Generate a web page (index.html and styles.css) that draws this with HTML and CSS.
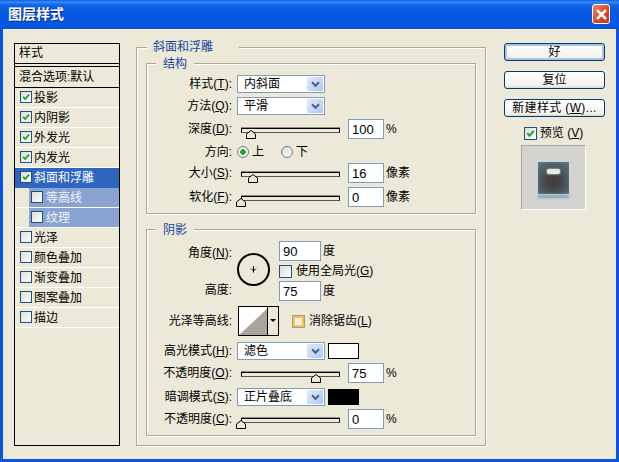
FILE: index.html
```html
<!DOCTYPE html>
<html lang="zh">
<head>
<meta charset="utf-8">
<title>图层样式</title>
<link rel="stylesheet" href="styles.css">
</head>
<body>
<svg class="defs" width="0" height="0" aria-hidden="true">
  <symbol id="tick" viewBox="0 0 12 12"><path d="M2.5 5.8 L5 8.4 L9.6 3.2" fill="none" stroke="#21a121" stroke-width="2.2"/></symbol>
  <symbol id="chev" viewBox="0 0 9 7"><path d="M1 1.2 L4.5 4.8 L8 1.2" fill="none" stroke="#4d6185" stroke-width="2"/></symbol>
  <symbol id="thumb" viewBox="0 0 10 9"><path d="M5 .5 L9.5 4 V8.5 H.5 V4 Z" fill="#ece9d8" stroke="#000"/></symbol>
</svg>
<div class="dialog">
  <header class="titlebar">
    <span class="title">图层样式</span>
    <span class="close"><svg width="13" height="13" viewBox="0 0 13 13"><path d="M2 2 L11 11 M11 2 L2 11" stroke="#fff" stroke-width="2.6"/></svg></span>
  </header>
  <div class="content">
    <nav class="list">
      <div class="head">样式</div>
      <div class="blend">混合选项:默认</div>
      <div class="item"><span class="cb"><svg><use href="#tick"/></svg></span>投影</div>
      <div class="item"><span class="cb"><svg><use href="#tick"/></svg></span>内阴影</div>
      <div class="item"><span class="cb"><svg><use href="#tick"/></svg></span>外发光</div>
      <div class="item"><span class="cb"><svg><use href="#tick"/></svg></span>内发光</div>
      <div class="item selected"><span class="cb"><svg><use href="#tick"/></svg></span>斜面和浮雕</div>
      <div class="item sub"><span class="subfill"><span class="cb"></span>等高线</span></div>
      <div class="item sub"><span class="subfill"><span class="cb"></span>纹理</span></div>
      <div class="item"><span class="cb"></span>光泽</div>
      <div class="item"><span class="cb"></span>颜色叠加</div>
      <div class="item"><span class="cb"></span>渐变叠加</div>
      <div class="item"><span class="cb"></span>图案叠加</div>
      <div class="item"><span class="cb"></span>描边</div>
    </nav>

    <main class="group outer">
      <span class="legend legend-outer">斜面和浮雕</span>

      <section class="group inner struct">
        <span class="legend">结构</span>
        <div class="row h22"><label class="lbl lh18">样式(<u>T</u>):</label><div class="select"><span>内斜面</span><i class="arrow"><svg><use href="#chev"/></svg></i></div></div>
        <div class="row h22"><label class="lbl lh18">方法(<u>Q</u>):</label><div class="select"><span>平滑</span><i class="arrow"><svg><use href="#chev"/></svg></i></div></div>
        <div class="row h22"><label class="lbl">深度(<u>D</u>):</label><div class="slider"><span class="track"></span><svg class="knob" style="left:9px"><use href="#thumb"/></svg></div><div class="num">100</div><span class="unit">%</span></div>
        <div class="row h22 radios"><label class="lbl lh22">方向:</label><span class="radio on"></span><span class="rtext first">上</span><span class="radio"></span><span class="rtext">下</span></div>
        <div class="row h24"><label class="lbl">大小(<u>S</u>):</label><div class="slider"><span class="track"></span><svg class="knob" style="left:11px"><use href="#thumb"/></svg></div><div class="num">16</div><span class="unit">像素</span></div>
        <div class="row h20"><label class="lbl">软化(<u>F</u>):</label><div class="slider"><span class="track"></span><svg class="knob" style="left:-1px"><use href="#thumb"/></svg></div><div class="num">0</div><span class="unit">像素</span></div>
      </section>

      <section class="group inner shadow">
        <span class="legend">阴影</span>
        <div class="angle">
          <div class="anglelabels"><label class="lbl a1">角度(<u>N</u>):</label><label class="lbl a2">高度:</label></div>
          <div class="dial"><svg width="7" height="7" viewBox="0 0 7 7"><path d="M3.5 0 V6.5 M1 2.5 L3.5 5 L6 2.5" fill="none" stroke="#000" stroke-width="1"/></svg></div>
          <div class="anglefields">
            <div class="fieldrow"><div class="num short">90</div><span class="unit small">度</span></div>
            <div class="fieldrow global"><span class="cb big"></span><span class="cbtext">使用全局光(<u>G</u>)</span></div>
            <div class="fieldrow"><div class="num short">75</div><span class="unit small">度</span></div>
          </div>
        </div>
        <div class="row h36"><label class="lbl lh30">光泽等高线:</label>
          <div class="contour"><svg class="curve" width="30" height="28" viewBox="0 0 30 28"><path d="M0 28 L30 0 V28 Z" fill="#a9a59a"/></svg><span class="caret"></span></div>
          <span class="cb big hot"></span><span class="cbtext">消除锯齿(<u>L</u>)</span>
        </div>
        <div class="row h21"><label class="lbl lh18">高光模式(<u>H</u>):</label><div class="select"><span>滤色</span><i class="arrow"><svg><use href="#chev"/></svg></i></div><span class="swatch white"></span></div>
        <div class="row h25"><label class="lbl">不透明度(<u>O</u>):</label><div class="slider"><span class="track"></span><svg class="knob" style="left:74px"><use href="#thumb"/></svg></div><div class="num">75</div><span class="unit">%</span></div>
        <div class="row h21"><label class="lbl lh18">暗调模式(<u>S</u>):</label><div class="select"><span>正片叠底</span><i class="arrow"><svg><use href="#chev"/></svg></i></div><span class="swatch black"></span></div>
        <div class="row h20"><label class="lbl">不透明度(<u>C</u>):</label><div class="slider"><span class="track"></span><svg class="knob" style="left:-1px"><use href="#thumb"/></svg></div><div class="num">0</div><span class="unit">%</span></div>
      </section>
    </main>

    <aside class="side">
      <button class="btn default">好</button>
      <button class="btn">复位</button>
      <button class="btn wide">新建样式 (<u>W</u>)...</button>
      <div class="previewcheck"><span class="cb big"><svg><use href="#tick"/></svg></span><span>预览 (<u>V</u>)</span></div>
      <div class="preview"><div class="tile"><span class="shine"></span></div><span class="cast"></span></div>
    </aside>
  </div>
</div>
</body>
</html>
```

FILE: styles.css
```css
* { box-sizing: border-box; }
html, body { margin: 0; padding: 0; }
body {
  width: 619px;
  height: 462px;
  overflow: hidden;
  font: 12px/16px "Liberation Sans", "Noto Sans CJK SC", sans-serif;
  color: #000;
}
.defs { position: absolute; }
u { text-decoration: underline; }

.dialog {
  width: 619px;
  height: 462px;
  display: flex;
  flex-direction: column;
  background: linear-gradient(to right, #0a4fd8, #0a55e4 2px);
}
.titlebar {
  height: 29px;
  flex: none;
  display: flex;
  align-items: center;
  justify-content: space-between;
  padding: 0 9px 1px 8px;
  background: linear-gradient(to bottom, #0a5be0 0, #3a8cf5 2px, #0f62e8 5px, #0455e0 14px, #0558e6 24px, #0a4fd0 29px);
}
.title {
  color: #fff;
  font-size: 14px;
  font-weight: 700;
  letter-spacing: 0;
  text-shadow: 1px 1px 0 #0b2f90;
}
.close {
  width: 18px;
  height: 20px;
  display: flex;
  align-items: center;
  justify-content: center;
  border: 1px solid #fff;
  border-radius: 3px;
  background: linear-gradient(135deg, #eb8b6e, #d9441f 60%, #c23a15);
}

.content {
  flex: 1;
  display: flex;
  align-items: flex-start;
  margin: 0 3px 3px;
  padding: 14px 0 0 11px;
  background: #ece9d8;
}

/* left list */
.list {
  width: 106px;
  height: 403px;
  flex: none;
  border: 1px solid #000;
  display: flex;
  flex-direction: column;
}
.head {
  height: 20px;
  padding-left: 4px;
  line-height: 19px;
  border-bottom: 1px solid #000;
}
.blend {
  height: 22px;
  padding-left: 4px;
  margin-top: 2px;
  border-top: 1px solid #000;
  border-bottom: 1px solid #000;
  line-height: 20px;
}
.item {
  height: 20px;
  flex: none;
  display: flex;
  align-items: center;
  padding-left: 5px;
  border-bottom: 1px solid #fff;
}
.cb {
  width: 12px;
  height: 12px;
  flex: none;
  margin-right: 2px;
  margin-top: -2px;
  border: 1px solid #1c5180;
  background: linear-gradient(135deg, #dcdcd7, #fff);
  display: block;
}
.cb svg { display: block; width: 10px; height: 10px; }
.selected {
  background: #2f66c0;
  color: #fff;
  border-bottom: 0;
}
.sub {
  padding-left: 14px;
  border-bottom: 1px solid #fff;
}
.subfill {
  display: flex;
  align-items: center;
  flex: 1;
  height: 19px;
  padding-left: 2px;
  margin-right: 0;
  background: #8aa4d2;
  color: #eef2fa;
}
.subfill .cb { margin-right: 3px; }

/* groups */
.group {
  position: relative;
  border: 1px solid #aca899;
  box-shadow: 1px 1px 0 #fff, inset 1px 1px 0 #fff;
}
.outer {
  width: 350px;
  height: 399px;
  flex: none;
  margin: 4px 0 0 16px;
  padding: 15px 0 0 9px;
}
.inner { width: 330px; }
.struct { height: 151px; padding-top: 11px; }
.shadow { height: 207px; margin-top: 15px; padding-top: 11px; }
.legend {
  position: absolute;
  top: -8px;
  left: 9px;
  height: 16px;
  padding: 0 7px;
  background: #ece9d8;
  color: #14489f;
  font-size: 12px;
}
.legend-outer { left: 10px; height: 14px; line-height: 14px; padding: 0 26px 0 6px; }

/* form rows */
.row { display: flex; align-items: flex-start; }
.h20 { height: 20px; }
.h21 { height: 21px; }
.h22 { height: 22px; }
.h24 { height: 24px; }
.h25 { height: 25px; }
.h36 { height: 36px; }
.lbl {
  width: 85px;
  flex: none;
  margin-right: 5px;
  text-align: right;
  line-height: 20px;
  white-space: nowrap;
}
.lbl.lh18 { line-height: 18px; }
.lbl.lh22 { line-height: 22px; }
.lbl.lh30 { line-height: 30px; }

.select {
  width: 88px;
  height: 18px;
  flex: none;
  display: flex;
  align-items: center;
  justify-content: space-between;
  padding: 0 1px 0 6px;
  background: #fff;
  border: 1px solid #7f9db9;
  white-space: nowrap;
}
.arrow {
  width: 16px;
  height: 14px;
  flex: none;
  display: flex;
  align-items: center;
  justify-content: center;
  background: linear-gradient(135deg, #e1eafe, #aec8f7);
  border-radius: 1px;
}
.arrow svg { width: 9px; height: 7px; }

.slider { position: relative; width: 103px; height: 20px; flex: none; }
.track {
  display: block;
  height: 5px;
  margin: 9px 0 0 4px;
  border: 1px solid #000;
  border-bottom-color: #555;
  box-shadow: 0 -1px 0 #8f8c7c;
  background: #ece9d8;
}
.knob { position: absolute; top: 11px; width: 10px; height: 9px; }

.num {
  width: 36px;
  height: 20px;
  flex: none;
  margin-left: 8px;
  padding-left: 3px;
  background: #fff;
  border: 1px solid #7f9db9;
  line-height: 19px;
  font-size: 13px;
}
.num.short { width: 42px; margin-left: 0; }
.unit { margin-left: 2px; line-height: 20px; white-space: nowrap; }
.unit.small { margin-left: 2px; }

.radios .radio {
  width: 12px;
  height: 12px;
  flex: none;
  margin-top: 5px;
  border: 1px solid #6a7d97;
  border-radius: 50%;
  background: linear-gradient(135deg, #dcdcd7, #fff);
}
.radios .radio.on { background: radial-gradient(circle, #21a121 0 2.5px, #f4f4ef 3px); }
.rtext { line-height: 22px; margin-left: 3px; }
.rtext.first { width: 29px; }

/* angle block */
.angle { display: flex; height: 65px; }
.anglelabels { width: 90px; flex: none; display: flex; flex-direction: column; }
.anglelabels .lbl { margin: 0; width: 85px; }
.a1 { height: 24px; line-height: 24px; }
.a2 { margin-top: 14px !important; line-height: 22px; }
.dial {
  width: 33px;
  height: 33px;
  flex: none;
  margin: 12px 9px 0 0;
  border: 2px solid #000;
  border-radius: 50%;
  display: flex;
  align-items: center;
  justify-content: center;
}
.dial svg { display: block; }
.anglefields { display: flex; flex-direction: column; }
.fieldrow { display: flex; height: 20px; }
.fieldrow.global { height: 20px; align-items: center; }
.cb.big { width: 13px; height: 13px; margin: 0; }
.cb.big svg { width: 11px; height: 11px; }
.cbtext { margin-left: 4px; line-height: 16px; white-space: nowrap; }

.contour {
  position: relative;
  width: 41px;
  height: 30px;
  flex: none;
  margin-left: 1px;
  border: 1px solid #000;
  background: #fff;
}
.curve { display: block; }
.caret {
  position: absolute;
  right: 0;
  top: 0;
  bottom: 0;
  width: 11px;
  border-left: 1px solid #000;
  background: #ece9d8;
}
.caret::after {
  content: "";
  position: absolute;
  left: 2px;
  top: 12px;
  border: 3px solid transparent;
  border-top: 3px solid #000;
  border-bottom: 0;
}
.row .cb.hot {
  margin: 9px 0 0 13px;
  border: 1px solid #a79e80;
  background: #fdf3dc;
  box-shadow: inset 0 0 0 2px #f3bd5d;
}
.row .cbtext { line-height: 30px; }

.swatch { width: 31px; height: 16px; flex: none; margin: 1px 0 0 3px; border: 1px solid #000; }
.white { background: #fff; }
.black { background: #000; }

/* right column */
.side {
  width: 101px;
  flex: none;
  margin-left: 18px;
  display: flex;
  flex-direction: column;
  align-items: center;
}
.btn {
  width: 101px;
  height: 18px;
  flex: none;
  padding: 0;
  font: inherit;
  line-height: 15px;
  color: #000;
  border: 1px solid #003c74;
  border-radius: 3px;
  background: linear-gradient(to bottom, #fff, #f3f2ec 85%, #dcd8c8);
}
.btn + .btn { margin-top: 10px; }
.btn.default { box-shadow: inset 0 0 0 2px #a9c3ea; }
.btn.wide { letter-spacing: .35px; }
.previewcheck {
  display: flex;
  align-items: center;
  gap: 3px;
  height: 16px;
  margin: 8px 2px 0 0;
  white-space: nowrap;
}
.preview {
  position: relative;
  width: 65px;
  height: 65px;
  flex: none;
  margin: 4px 3px 0 0;
  padding: 16px 0 0 16px;
  border: 1px solid;
  border-color: #aca899 #fff #fff #aca899;
  background: #d3d3d1;
}
.tile {
  position: relative;
  width: 31px;
  height: 32px;
  background: radial-gradient(circle at 50% 60%, #433f3e 20%, #4f6872 75%, #5b7a86);
  box-shadow: inset 0 0 2px #6b8a96;
}
.shine {
  position: absolute;
  left: 9px;
  top: 7px;
  width: 13px;
  height: 5px;
  background: #e8e8e4;
  border-radius: 2px;
  box-shadow: 0 0 2px #fff;
}
.cast {
  position: absolute;
  left: 16px;
  top: 49px;
  width: 31px;
  height: 3px;
  background: #7fa4b6;
  filter: blur(1px);
}
```
